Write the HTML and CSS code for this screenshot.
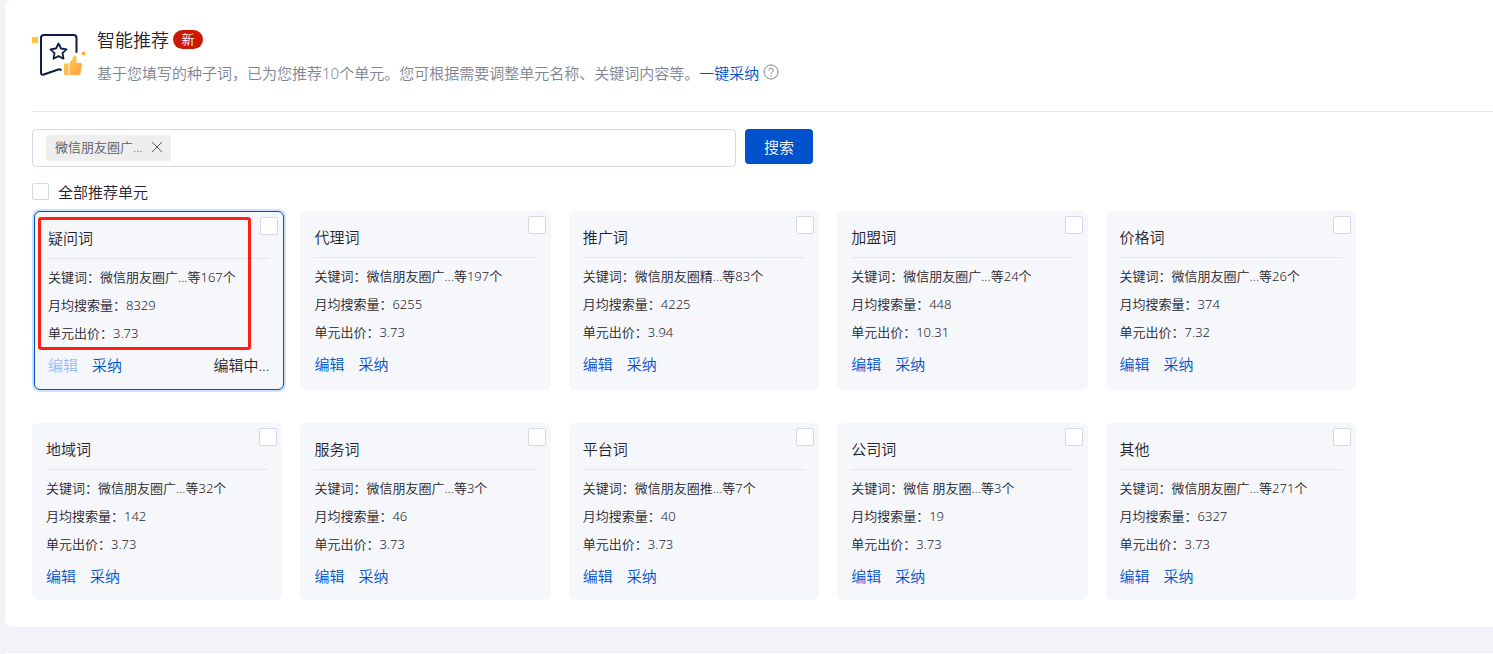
FILE: index.html
```html
<!DOCTYPE html>
<html lang="zh-CN">
<head>
<meta charset="utf-8">
<meta name="viewport" content="width=device-width, initial-scale=1">
<title>智能推荐</title>
<link rel="stylesheet" href="styles.css">
</head>
<body>
<main class="panel">
  <header class="intro">
    <svg class="intro-icon" viewBox="0 0 54 46" aria-hidden="true">
      <defs>
        <linearGradient id="thumb" x1="0" y1="0" x2="1" y2="1">
          <stop offset="0" stop-color="#ffd652"/>
          <stop offset="1" stop-color="#ff9c40"/>
        </linearGradient>
      </defs>
      <rect x="0" y="5" width="6" height="6" fill="#ffc440"/>
      <rect x="50" y="20" width="3" height="3" fill="#ffa03f"/>
      <path d="M44.500 20V6q0-3-3-3H12q-3 0-3 3v34.500q0 3 2.800 2L27 37.300q.8-.3 1.800.6" fill="none" stroke="#0a1f44" stroke-width="2" stroke-linecap="round"/>
      <path d="M26.500 11.500l2.500 5 5.500.8-4 3.900 1 5.500-5-2.600-5 2.600 1-5.500-4-3.900 5.500-.8z" fill="none" stroke="#0a1f44" stroke-width="1.800" stroke-linejoin="round"/>
      <path d="M32 31.500h4.500V43H33q-1 0-1-1zM37.500 31q3-2 3.700-6.200.3-1.300 1.500-1.200 2 .3 2 3.200 0 2-.6 4H48q2.200 0 1.900 2.200L48.500 41q-.3 2-2.300 2h-8.700z" fill="url(#thumb)"/>
    </svg>
    <div class="intro-text">
      <div class="intro-title"><h1>智能推荐</h1><span class="badge">新</span></div>
      <p>基于您填写的种子词，已为您推荐10个单元。您可根据需要调整单元名称、关键词内容等。<a href="#">一键采纳</a><button class="help" type="button" aria-label="帮助"><svg viewBox="0 0 16 16"><circle cx="8" cy="8" r="7"/><path d="M5.800 6.300a2.200 2.200 0 1 1 3.500 1.800C8.400 8.700 8 9 8 10M8 11.300v1.200"/></svg></button></p>
    </div>
  </header>

  <form class="search">
    <div class="search-box">
      <span class="tag">微信朋友圈广...<button type="button" aria-label="移除"><svg viewBox="0 0 12 12"><path d="M1 1l10 10M11 1L1 11"/></svg></button></span>
      <input type="text" aria-label="种子词">
    </div>
    <button class="search-button" type="button">搜索</button>
  </form>

  <label class="select-all"><input class="check" type="checkbox"><span>全部推荐单元</span></label>

  <section class="cards">
    <article class="card card-active">
      <input class="check card-check" type="checkbox" aria-label="疑问词">
      <h2>疑问词</h2>
      <ul><li>关键词：微信朋友圈广...等167个</li><li>月均搜索量：8329</li><li>单元出价：3.73</li></ul>
      <div class="actions"><button type="button" disabled>编辑</button><button type="button">采纳</button><span class="status">编辑中...</span></div>
      <div class="highlight"></div>
    </article>
    <article class="card">
      <input class="check card-check" type="checkbox" aria-label="代理词">
      <h2>代理词</h2>
      <ul><li>关键词：微信朋友圈广...等197个</li><li>月均搜索量：6255</li><li>单元出价：3.73</li></ul>
      <div class="actions"><button type="button">编辑</button><button type="button">采纳</button></div>
    </article>
    <article class="card">
      <input class="check card-check" type="checkbox" aria-label="推广词">
      <h2>推广词</h2>
      <ul><li>关键词：微信朋友圈精...等83个</li><li>月均搜索量：4225</li><li>单元出价：3.94</li></ul>
      <div class="actions"><button type="button">编辑</button><button type="button">采纳</button></div>
    </article>
    <article class="card">
      <input class="check card-check" type="checkbox" aria-label="加盟词">
      <h2>加盟词</h2>
      <ul><li>关键词：微信朋友圈广...等24个</li><li>月均搜索量：448</li><li>单元出价：10.31</li></ul>
      <div class="actions"><button type="button">编辑</button><button type="button">采纳</button></div>
    </article>
    <article class="card">
      <input class="check card-check" type="checkbox" aria-label="价格词">
      <h2>价格词</h2>
      <ul><li>关键词：微信朋友圈广...等26个</li><li>月均搜索量：374</li><li>单元出价：7.32</li></ul>
      <div class="actions"><button type="button">编辑</button><button type="button">采纳</button></div>
    </article>
    <article class="card">
      <input class="check card-check" type="checkbox" aria-label="地域词">
      <h2>地域词</h2>
      <ul><li>关键词：微信朋友圈广...等32个</li><li>月均搜索量：142</li><li>单元出价：3.73</li></ul>
      <div class="actions"><button type="button">编辑</button><button type="button">采纳</button></div>
    </article>
    <article class="card">
      <input class="check card-check" type="checkbox" aria-label="服务词">
      <h2>服务词</h2>
      <ul><li>关键词：微信朋友圈广...等3个</li><li>月均搜索量：46</li><li>单元出价：3.73</li></ul>
      <div class="actions"><button type="button">编辑</button><button type="button">采纳</button></div>
    </article>
    <article class="card">
      <input class="check card-check" type="checkbox" aria-label="平台词">
      <h2>平台词</h2>
      <ul><li>关键词：微信朋友圈推...等7个</li><li>月均搜索量：40</li><li>单元出价：3.73</li></ul>
      <div class="actions"><button type="button">编辑</button><button type="button">采纳</button></div>
    </article>
    <article class="card">
      <input class="check card-check" type="checkbox" aria-label="公司词">
      <h2>公司词</h2>
      <ul><li>关键词：微信 朋友圈...等3个</li><li>月均搜索量：19</li><li>单元出价：3.73</li></ul>
      <div class="actions"><button type="button">编辑</button><button type="button">采纳</button></div>
    </article>
    <article class="card">
      <input class="check card-check" type="checkbox" aria-label="其他">
      <h2>其他</h2>
      <ul><li>关键词：微信朋友圈广...等271个</li><li>月均搜索量：6327</li><li>单元出价：3.73</li></ul>
      <div class="actions"><button type="button">编辑</button><button type="button">采纳</button></div>
    </article>
  </section>
</main>
<div class="next-panel"></div>
</body>
</html>
```
FILE: styles.css
```css
* {
  box-sizing: border-box;
}

body {
  display: flex;
  flex-direction: column;
  gap: 26px;
  min-height: 100vh;
  margin: 0;
  padding-left: 5px;
  background: #f2f3f8;
  color: #1f232b;
  font-family: "Noto Sans", "Noto Sans CJK SC", sans-serif;
  font-size: 15px;
  font-weight: 350;
}

h1,
h2,
p,
ul {
  margin: 0;
  padding: 0;
  font-weight: 350;
}

button {
  padding: 0;
  border: 0;
  background: none;
  color: #0052cc;
  font: inherit;
  cursor: pointer;
}

.panel {
  padding: 0 0 27px 27px;
  border-radius: 8px 0 0 8px;
  background: #fff;
}

.next-panel {
  flex: 1;
  border-radius: 8px 0 0 0;
  background: #fff;
}

.intro {
  display: flex;
  gap: 11px;
  padding: 23px 0 22px;
  border-bottom: 1px solid #e2e6f0;
}

.intro-icon {
  flex: none;
  width: 54px;
  height: 46px;
  margin-top: 9px;
}

.intro-title {
  display: flex;
  align-items: center;
  gap: 4px;
  height: 32px;
}

.intro-title h1 {
  font-size: 18px;
}

.badge {
  width: 30px;
  border-radius: 10px;
  background: #cc1800;
  color: #fff;
  font-size: 13px;
  line-height: 19px;
  text-align: center;
}

.intro-text p {
  display: flex;
  align-items: center;
  height: 34px;
  color: #7d8492;
}

.intro-text a {
  color: #0052cc;
  text-decoration: none;
}

.help {
  display: flex;
  margin-left: 4px;
}

.help svg {
  width: 16px;
  height: 16px;
  fill: none;
  stroke: #7d8492;
}

.search {
  display: flex;
  align-items: flex-start;
  gap: 9px;
  padding-top: 17px;
}

.search-box {
  display: flex;
  flex: 0 1 704px;
  align-items: flex-start;
  height: 38px;
  padding: 5px 13px;
  border: 1px solid #d3d9e6;
  border-radius: 4px;
}

.search-box input {
  flex: 1;
  min-width: 0;
  height: 26px;
  border: 0;
  outline: 0;
  font: inherit;
}

.tag {
  display: flex;
  align-items: center;
  gap: 8px;
  height: 26px;
  padding: 0 8px 3px 9px;
  border-radius: 2px;
  background: #eee;
  color: #545a66;
  font-size: 13px;
}

.tag button {
  display: flex;
}

.tag svg {
  width: 12px;
  height: 12px;
  fill: none;
  stroke: #545a66;
}

.search-button {
  width: 68px;
  height: 35px;
  border-radius: 4px;
  background: #0052cc;
  color: #fff;
}

.select-all {
  display: flex;
  align-items: center;
  gap: 9px;
  width: max-content;
  height: 22px;
  margin: 13px 0 9px;
}

.check {
  width: 17px;
  height: 17px;
  margin: 0;
  border: 1px solid #d3d9e6;
  border-radius: 2px;
  background: #fff;
  appearance: none;
}

.cards {
  display: grid;
  grid-template-columns: repeat(5, minmax(0, 1fr));
  gap: 33px 18px;
  margin-right: 137px;
}

.card {
  position: relative;
  padding: 11px 14px 10px;
  border-radius: 6px;
  background: #f6f7fb;
}

.card-active {
  margin: 0 -2px 0 2px;
  padding-left: 13px;
  border: 1px solid #0052cc;
  box-shadow: 0 0 0 2px #cce0ff;
}

.card-check {
  position: absolute;
  top: 5px;
  right: 5px;
  width: 18px;
  height: 18px;
}

.card h2 {
  padding-bottom: 5px;
  border-bottom: 1px solid #e2e6f0;
  font-size: 15px;
  line-height: 30px;
}

.card ul {
  padding-top: 4px;
  list-style: none;
  font-size: 13px;
  line-height: 28px;
  white-space: nowrap;
}

.actions {
  display: flex;
  gap: 14px;
  margin-top: 4px;
  line-height: 28px;
}

.actions button:disabled {
  color: #8fbbff;
}

.status {
  margin-left: auto;
}

.highlight {
  position: absolute;
  top: 5px;
  left: 3px;
  width: 213px;
  height: 133px;
  border: 3px solid #ff2014;
  border-radius: 3px;
  pointer-events: none;
}
```
